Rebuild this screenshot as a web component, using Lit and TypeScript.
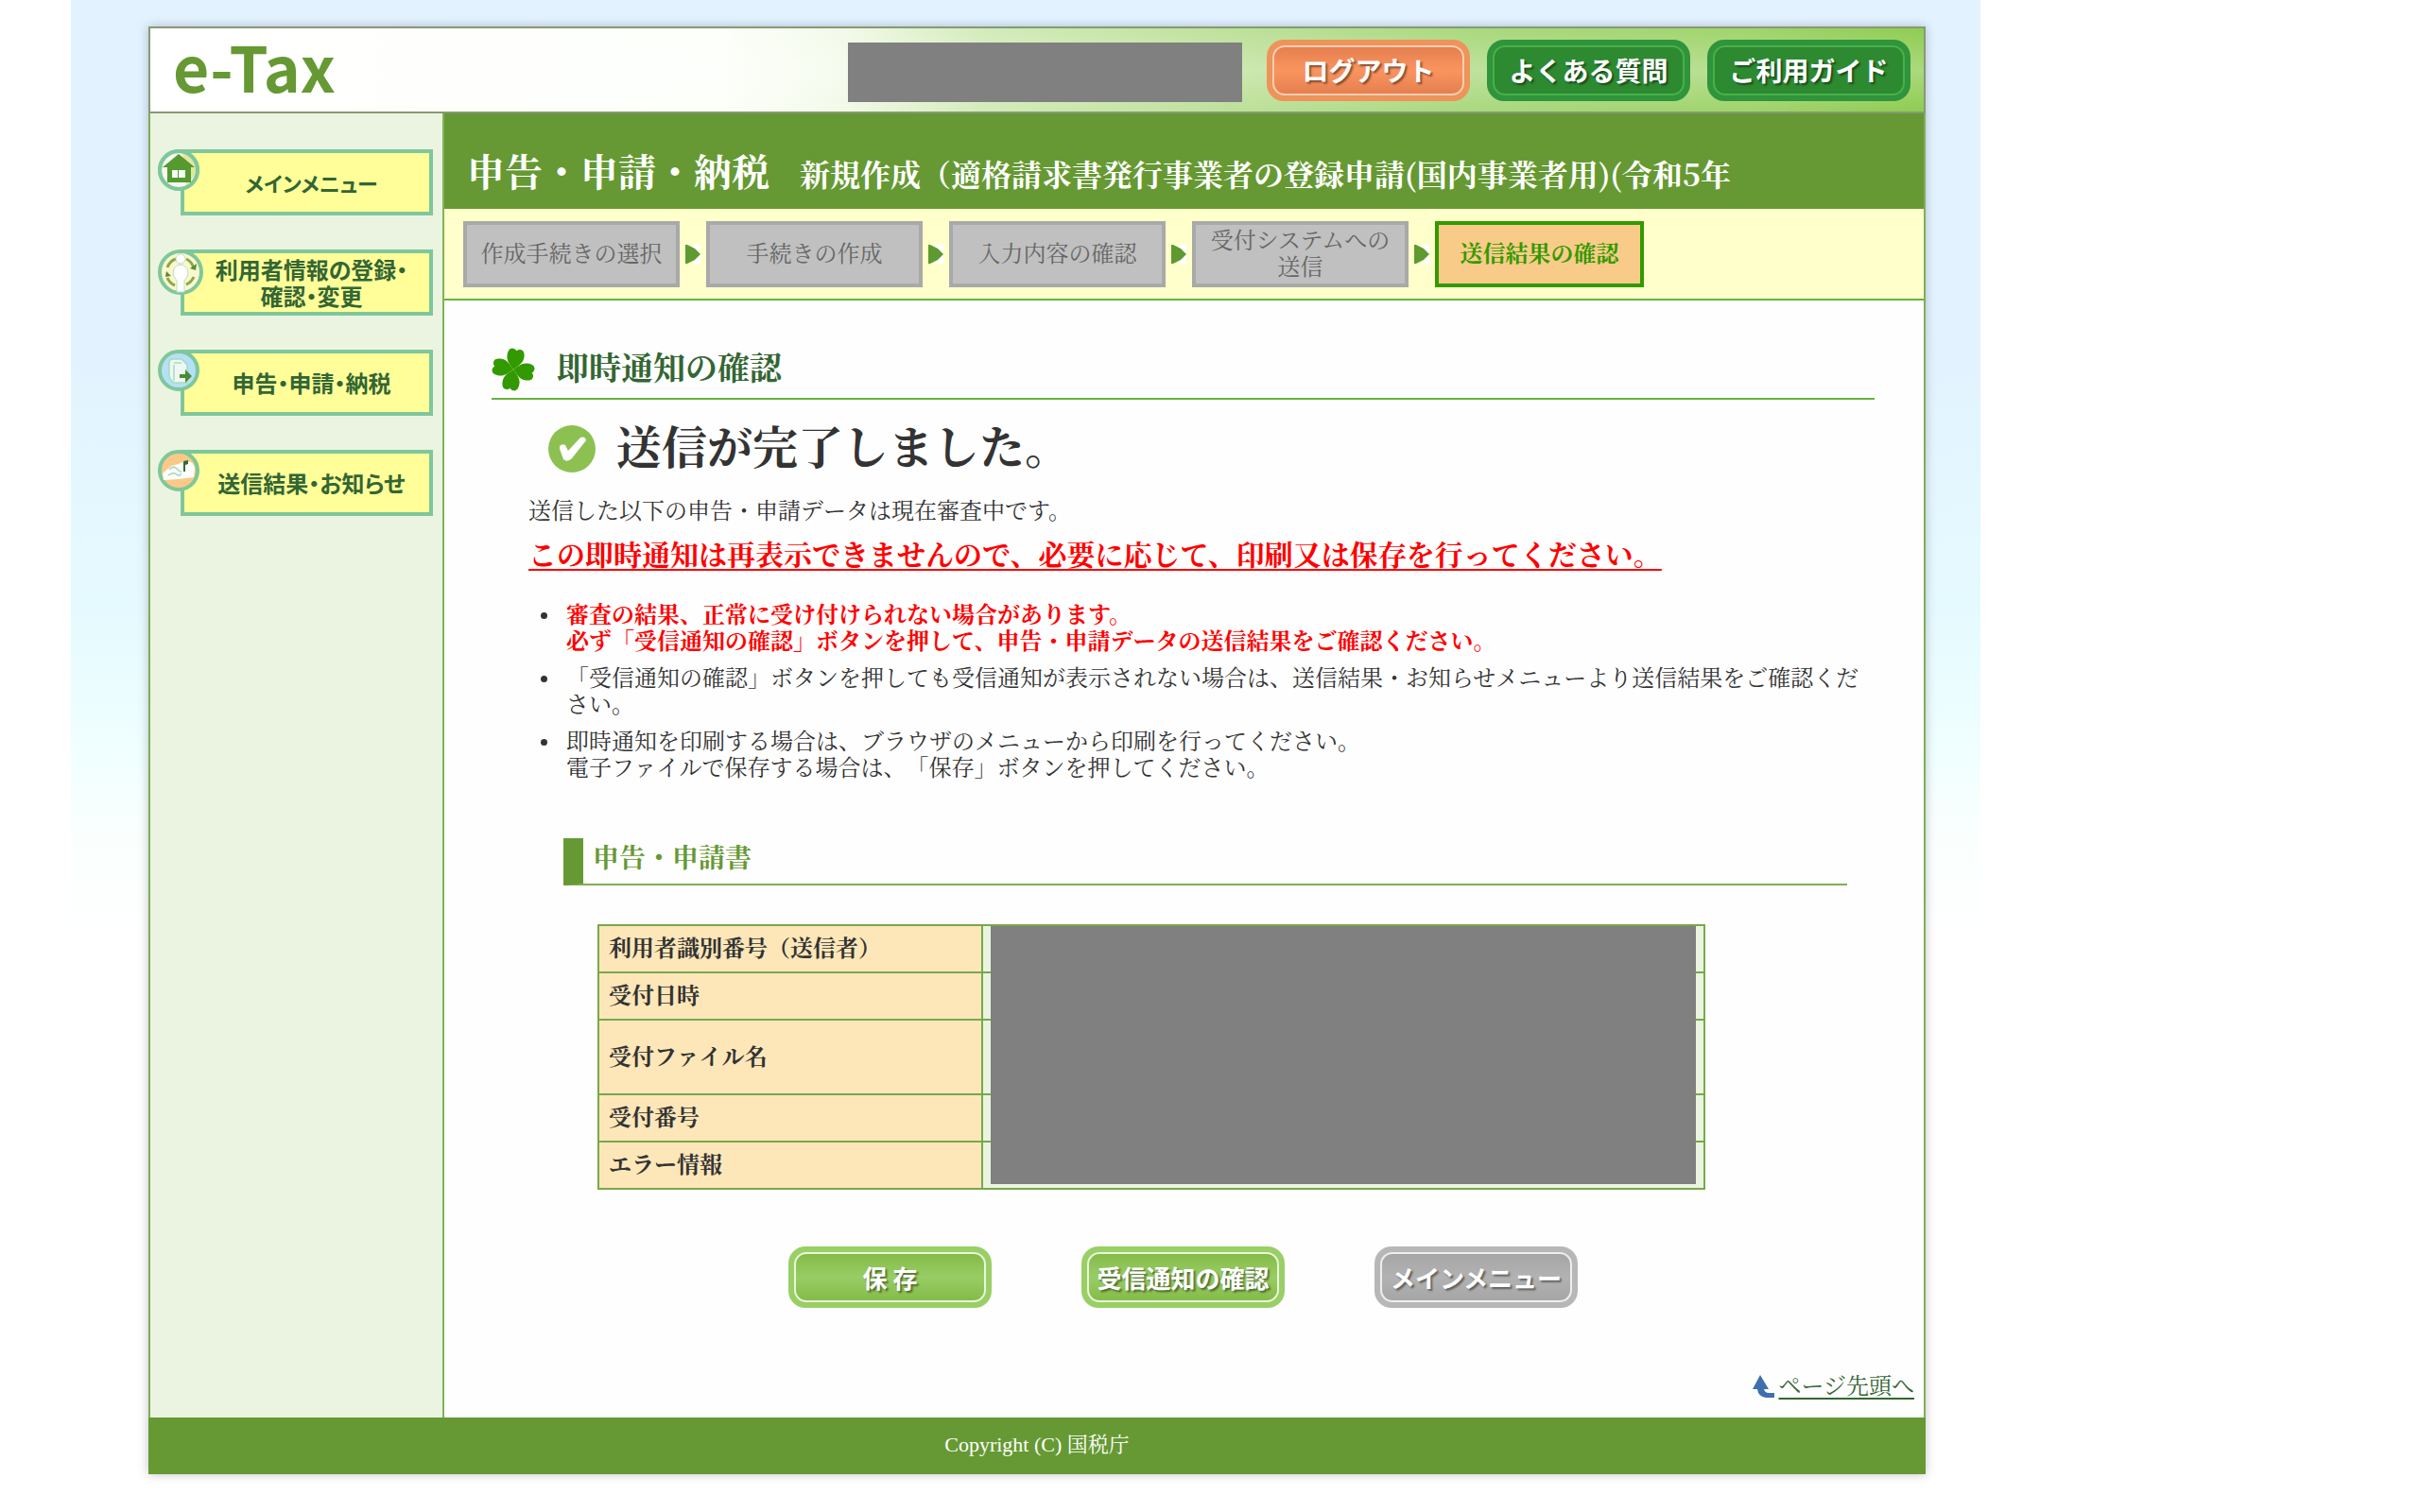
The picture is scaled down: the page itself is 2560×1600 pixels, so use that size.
import { LitElement, html, css, svg } from "lit";
import { customElement } from "lit/decorators.js";
import { classMap } from "lit/directives/class-map.js";

const homeIcon = svg`
  <circle cx="22" cy="22" r="20" fill="#f4f8ee" stroke="#7fc79b" stroke-width="4"/>
  <path d="M26 4A18 18 0 0 1 39 28L30 38Z" fill="#e3e6a0"/>
  <path d="M22 5L39 19H35V35H10V19H5Z" fill="#55992f"/>
  <path d="M15 22h6v8h-6zM22 22h7v8h-7z" fill="#f2fbf4"/>
  <circle cx="22" cy="22" r="20" fill="none" stroke="#7fc79b" stroke-width="4"/>`;

const userIcon = svg`
  <circle cx="24" cy="24" r="22" fill="#fbf7cf" stroke="#7fc79b" stroke-width="4"/>
  <path d="M10 19a15 15 0 0 1 9-9M30 10a15 15 0 0 1 8 10M38 29a15 15 0 0 1-8 8M18 38a15 15 0 0 1-8-8" fill="none" stroke="#8aa844" stroke-width="3"/>
  <path d="M34 20l6 2 1-7zM8 29l6-1-5-5z" fill="#5c8a34"/>
  <path d="M17 20q7-8 14 0l1 7-4 6v12h-8V33l-4-6z" fill="#fff" stroke="#b9dfc4" stroke-width="1"/>
  <circle cx="24" cy="10" r="5" fill="#fff" stroke="#b9dfc4" stroke-width="1"/>`;

const filingIcon = svg`
  <circle cx="22" cy="22" r="20" fill="#b5e0f6" stroke="#7fc79b" stroke-width="4"/>
  <path d="M12 14q0-4 4-4h9l6 6v19H17q-5-3-5-9z" fill="#eef8f2" stroke="#a5dcc0" stroke-width="1.5"/>
  <path d="M17 16v17M17 14h8" stroke="#a5dcc0" stroke-width="1.5" fill="none"/>
  <path d="M23 26h6v-5l7 7-7 7v-5h-6z" fill="#4c8a35"/>`;

const mailIcon = svg`
  <circle cx="22" cy="22" r="20" fill="#fbc987" stroke="#7fc79b" stroke-width="4"/>
  <path d="M5 25l9-8 8-2 6-3q10-1 11 8l-1 9-16 2-16 1z" fill="#fdfffc"/>
  <path d="M12 21q4-5 8-1t5 3M11 27q5-4 9-1t4-1" fill="none" stroke="#b4dcc4" stroke-width="2"/>
  <path d="M27 23V12l5-1v4l-3 1v7z" fill="#2f6d35"/>`;

interface MenuItem {
  lines: string[];
  icon: unknown;
  size: number;
  kana?: boolean;
}

const MENU: MenuItem[] = [
  { lines: ["メインメニュー"], icon: homeIcon, size: 44, kana: true },
  { lines: ["利用者情報の登録・", "確認・変更"], icon: userIcon, size: 48 },
  { lines: ["申告・申請・納税"], icon: filingIcon, size: 44 },
  { lines: ["送信結果・お知らせ"], icon: mailIcon, size: 44 },
];

const STEPS = [
  "作成手続きの選択",
  "手続きの作成",
  "入力内容の確認",
  "受付システムへの送信",
  "送信結果の確認",
];

const ROWS = [
  { label: "利用者識別番号（送信者）", tall: false },
  { label: "受付日時", tall: false },
  { label: "受付ファイル名", tall: true },
  { label: "受付番号", tall: false },
  { label: "エラー情報", tall: false },
];

@customElement("side-menu")
export class SideMenu extends LitElement {
  static styles = css`
    :host {
      display: block;
      font-family: "Noto Sans CJK JP", sans-serif;
    }
    .list {
      list-style: none;
      margin: 0;
      padding: 38px 10px 0 32px;
      display: grid;
      gap: 36px;
    }
    .item {
      position: relative;
    }
    .link {
      display: flex;
      flex-direction: column;
      align-items: center;
      justify-content: center;
      box-sizing: border-box;
      height: 70px;
      padding-left: 10px;
      border: 4px solid #7fc79b;
      background: #fffe99;
      color: #336633;
      font-size: 24px;
      line-height: 28px;
      font-weight: 700;
      font-feature-settings: "palt";
      text-decoration: none;
      white-space: nowrap;
    }
    .kana {
      font-size: 22px;
    }
    .icon {
      position: absolute;
      left: -24px;
      top: 0;
    }
  `;

  render() {
    return html`
      <nav>
        <ul class="list">
          ${MENU.map(
            (m) => html`
              <li class="item">
                <a class=${classMap({ link: true, kana: !!m.kana })} href="#">${m.lines.map((l) => html`<span>${l}</span>`)}</a>
                <svg class="icon" width=${m.size} height=${m.size} viewBox="0 0 ${m.size} ${m.size}" aria-hidden="true">${m.icon}</svg>
              </li>
            `
          )}
        </ul>
      </nav>
    `;
  }
}

@customElement("step-bar")
export class StepBar extends LitElement {
  static styles = css`
    :host {
      display: block;
    }
    .steps {
      list-style: none;
      margin: 0;
      padding: 13px 20px 12px;
      display: flex;
      background: #ffffcc;
      border-bottom: 2px solid #66b33a;
    }
    .step {
      display: flex;
      align-items: center;
    }
    .box {
      box-sizing: border-box;
      width: 229px;
      height: 70px;
      padding: 0 8px;
      display: flex;
      align-items: center;
      justify-content: center;
      text-align: center;
      border: 4px solid #a9a9a9;
      background: #c0c0c0;
      color: #666666;
      font-size: 24px;
      line-height: 28px;
    }
    .current {
      width: 221px;
      background: #f8cc88;
      border-color: #339900;
      color: #339900;
      font-weight: 700;
    }
    .arrow {
      margin: 0 6px;
    }
  `;

  render() {
    const last = STEPS.length - 1;
    return html`
      <ol class="steps">
        ${STEPS.map(
          (s, i) => html`
            <li class="step">
              <span class=${classMap({ box: true, current: i === last })}>${s}</span>
              ${i < last
                ? html`<svg class="arrow" width="16" height="20" viewBox="0 0 16 20" aria-hidden="true"><path d="M7 0h9v20H7z" fill="#fff"/><path d="M0 0h2l8 4 6 6-6 6-8 4H0z" fill="#5f9a30"/></svg>`
                : null}
            </li>
          `
        )}
      </ol>
    `;
  }
}

@customElement("app-root")
export class AppRoot extends LitElement {
  static styles = css`
    :host {
      display: block;
      min-height: 100vh;
      background: #ffffff;
      color: #333333;
      font-family: "Liberation Serif", "Noto Serif CJK JP", "Noto Sans CJK JP", serif;
      font-size: 24px;
      line-height: 28px;
      text-spacing-trim: space-all;
    }
    .backdrop {
      margin: 0 465px 0 75px;
      padding: 28px 58px 39px 82px;
      background: linear-gradient(#e2f2ff 0, #e2f2ff 340px, #e5faff 640px, #f0ffff 800px, #fafffe 880px, #ffffff 1000px);
    }
    .sheet {
      background: #fefefe;
      box-shadow: 0 0 10px rgba(80, 80, 100, 0.35);
    }
    .header {
      display: flex;
      align-items: center;
      gap: 18px;
      box-sizing: border-box;
      height: 92px;
      padding: 0 14px 0 24px;
      border: 2px solid #869a76;
      background:
        linear-gradient(rgba(255, 255, 255, 0) 0, rgba(255, 255, 255, 0.25) 50%, rgba(255, 255, 255, 0) 100%),
        linear-gradient(90deg, #ffffff 0, #fdfffb 32%, #f3fae9 39%, #d3ebba 47%, #bfe19c 60%, #a9d87d 75%, #a0d46c 90%, #8fcc52 100%);
    }
    .brand {
      margin: 0 auto 10px 0;
      color: #669933;
      font-family: "Noto Sans CJK JP", sans-serif;
      font-size: 66px;
      line-height: 76px;
      font-weight: 700;
    }
    .masked {
      width: 417px;
      height: 63px;
      margin: 4px 8px 0 0;
      background: #808080;
    }
    .btn {
      display: flex;
      align-items: stretch;
      box-sizing: border-box;
      width: 215px;
      height: 65px;
      margin: 0;
      padding: 6px;
      border: 0;
      border-radius: 18px;
      color: #ffffff;
      font-family: "Noto Sans CJK JP", sans-serif;
      font-size: 26px;
      line-height: 32px;
      font-weight: 700;
      text-shadow: 2px 2px 2px rgba(0, 0, 0, 0.45);
      white-space: nowrap;
    }
    .face {
      flex: 1;
      display: flex;
      align-items: center;
      justify-content: center;
      border: 2px solid;
      border-radius: 13px;
    }
    .orange {
      background: #ee935a;
    }
    .orange .face {
      border-color: #f9cdb5;
      background: linear-gradient(#e5804f, #fa945f 50%, #e5804f);
    }
    .deep {
      background: #2f943b;
    }
    .deep .face {
      border-color: #48b149;
      background: #2d8a31;
    }
    .green {
      background: #99cf66;
    }
    .green .face {
      border-color: #e9f6da;
      background: linear-gradient(#85bb49, #98cd65 50%, #85bb49);
    }
    .gray {
      background: #b7b7b7;
    }
    .gray .face {
      border-color: #eeeeee;
      background: linear-gradient(#a6a6a6, #b2b2b2 50%, #a6a6a6);
    }
    .header .btn {
      font-size: 28px;
    }
    .body {
      display: grid;
      grid-template-columns: 311px minmax(0, 1fr);
      border: 2px solid #7fae55;
      border-width: 0 2px;
    }
    .side {
      border-right: 2px solid #82b258;
      background: #ebf4e0;
    }
    .title {
      display: flex;
      align-items: baseline;
      gap: 32px;
      height: 101px;
      padding: 36px 24px 0;
      box-sizing: border-box;
      margin: 0;
      background: #669933;
      color: #ffffff;
      font-family: "Noto Serif CJK JP", "Noto Sans CJK JP", serif;
      font-size: 40px;
      line-height: 48px;
      font-weight: 700;
      white-space: nowrap;
    }
    .sub {
      font-size: 32px;
    }
    .content {
      padding: 49px 52px 0 50px;
    }
    .heading {
      display: flex;
      align-items: center;
      gap: 23px;
      margin: 0;
      padding-bottom: 6px;
      border-bottom: 2px solid #69b23e;
      color: #336633;
      font-size: 34px;
      line-height: 48px;
      font-weight: 700;
    }
    .status {
      display: flex;
      align-items: center;
      gap: 22px;
      margin: 20px 0 0 60px;
      font-size: 48px;
      line-height: 64px;
      font-weight: 700;
    }
    .note {
      margin: 20px 0 0 39px;
    }
    .warning {
      margin: 15px 0 0 39px;
      color: #ff0000;
      font-size: 30px;
      line-height: 36px;
      font-weight: 700;
      text-decoration: underline;
      text-decoration-thickness: 2px;
      text-underline-offset: 4px;
    }
    .points {
      display: grid;
      gap: 11px;
      margin: 31px 8px 0 73px;
      padding: 0;
    }
    .points li {
      padding-left: 6px;
    }
    .alert {
      font-weight: 700;
    }
    .alert span {
      color: #ff0000;
    }
    .section {
      box-sizing: border-box;
      height: 50px;
      margin: 60px 29px 0 76px;
      padding-left: 10px;
      border-left: 21px solid #669933;
      border-bottom: 2px solid #7fae55;
      color: #669933;
      font-size: 28px;
      line-height: 44px;
      font-weight: 700;
    }
    .record {
      position: relative;
      margin: 41px 179px 0 112px;
    }
    .table {
      width: 100%;
      border-collapse: collapse;
    }
    .table th,
    .table td {
      height: 48px;
      padding: 0 10px;
      border: 2px solid #78a84a;
      box-sizing: border-box;
    }
    .table th {
      width: 406px;
      background: #fde7b9;
      text-align: left;
      font-weight: 700;
    }
    .table td {
      background: #ebf4e0;
    }
    .table tr {
      height: 50px;
    }
    .table .tall {
      height: 79px;
    }
    .cover {
      position: absolute;
      inset: 2px 10px 6px 416px;
      background: #808080;
    }
    .actions {
      display: flex;
      justify-content: center;
      gap: 95px;
      margin-top: 60px;
    }
    .top {
      display: flex;
      align-items: center;
      justify-content: flex-end;
      gap: 4px;
      padding: 69px 10px 19px;
    }
    .top a {
      color: #336633;
      text-underline-offset: 4px;
    }
    .footer {
      height: 60px;
      background: #669933;
      color: #ffffff;
      font-size: 22px;
      line-height: 58px;
      text-align: center;
    }
  `;

  render() {
    return html`
      <div class="backdrop">
        <div class="sheet">
          <header class="header">
            <p class="brand">e-Tax</p>
            <div class="masked"></div>
            <button class="btn orange" type="button"><span class="face">ログアウト</span></button>
            <button class="btn deep" type="button"><span class="face">よくある質問</span></button>
            <button class="btn deep" type="button"><span class="face">ご利用ガイド</span></button>
          </header>
          <div class="body">
            <aside class="side"><side-menu></side-menu></aside>
            <main>
              <h1 class="title">申告・申請・納税<span class="sub">新規作成（適格請求書発行事業者の登録申請(国内事業者用)(令和5年</span></h1>
              <step-bar></step-bar>
              <div class="content">
                <h2 class="heading">
                  <svg width="46" height="46" viewBox="-23 -23 46 46" aria-hidden="true">
                    <g fill="#339900" transform="rotate(10)">
                      ${[0, 90, 180, 270].map(
                        (a) => svg`<path transform="rotate(${a})" d="M0 0C-4 -4 -9 -8 -9 -14C-9 -18 -8 -22 -4 -22C-2 -22 -1 -21 0 -20C1 -21 2 -22 4 -22C8 -22 9 -18 9 -14C9 -8 4 -4 0 0Z"/>`
                      )}
                    </g>
                  </svg>
                  即時通知の確認
                </h2>
                <p class="status">
                  <svg width="50" height="50" viewBox="0 0 50 50" aria-hidden="true">
                    <circle cx="25" cy="25" r="25" fill="#8cc152"/>
                    <path d="M12 22q3-3 6-1l3 6L34 13q5-2 6 3L25 35q-5 5-9 1L12 25z" fill="#fff"/>
                  </svg>
                  送信が完了しました。
                </p>
                <p class="note">送信した以下の申告・申請データは現在審査中です。</p>
                <p class="warning">この即時通知は再表示できませんので、必要に応じて、印刷又は保存を行ってください。</p>
                <ul class="points">
                  <li class="alert"><span>審査の結果、正常に受け付けられない場合があります。<br />必ず「受信通知の確認」ボタンを押して、申告・申請データの送信結果をご確認ください。</span></li>
                  <li>「受信通知の確認」ボタンを押しても受信通知が表示されない場合は、送信結果・お知らせメニューより送信結果をご確認ください。</li>
                  <li>即時通知を印刷する場合は、ブラウザのメニューから印刷を行ってください。<br />電子ファイルで保存する場合は、「保存」ボタンを押してください。</li>
                </ul>
                <h3 class="section">申告・申請書</h3>
                <div class="record">
                  <table class="table">
                    <tbody>
                      ${ROWS.map(
                        (r) => html`<tr class=${classMap({ tall: r.tall })}><th scope="row">${r.label}</th><td></td></tr>`
                      )}
                    </tbody>
                  </table>
                  <div class="cover"></div>
                </div>
                <div class="actions">
                  <button class="btn green" type="button"><span class="face">保 存</span></button>
                  <button class="btn green" type="button"><span class="face">受信通知の確認</span></button>
                  <button class="btn gray" type="button"><span class="face">メインメニュー</span></button>
                </div>
              </div>
              <div class="top">
                <svg width="23" height="25" viewBox="0 0 23 25" aria-hidden="true">
                  <path d="M8 0L17 15H12Q13 19 17 19H23V24H14Q6 23 5 15H0Z" fill="#3f6fae"/>
                </svg>
                <a href="#">ページ先頭へ</a>
              </div>
            </main>
          </div>
          <footer class="footer">Copyright (C) 国税庁</footer>
        </div>
      </div>
    `;
  }
}
